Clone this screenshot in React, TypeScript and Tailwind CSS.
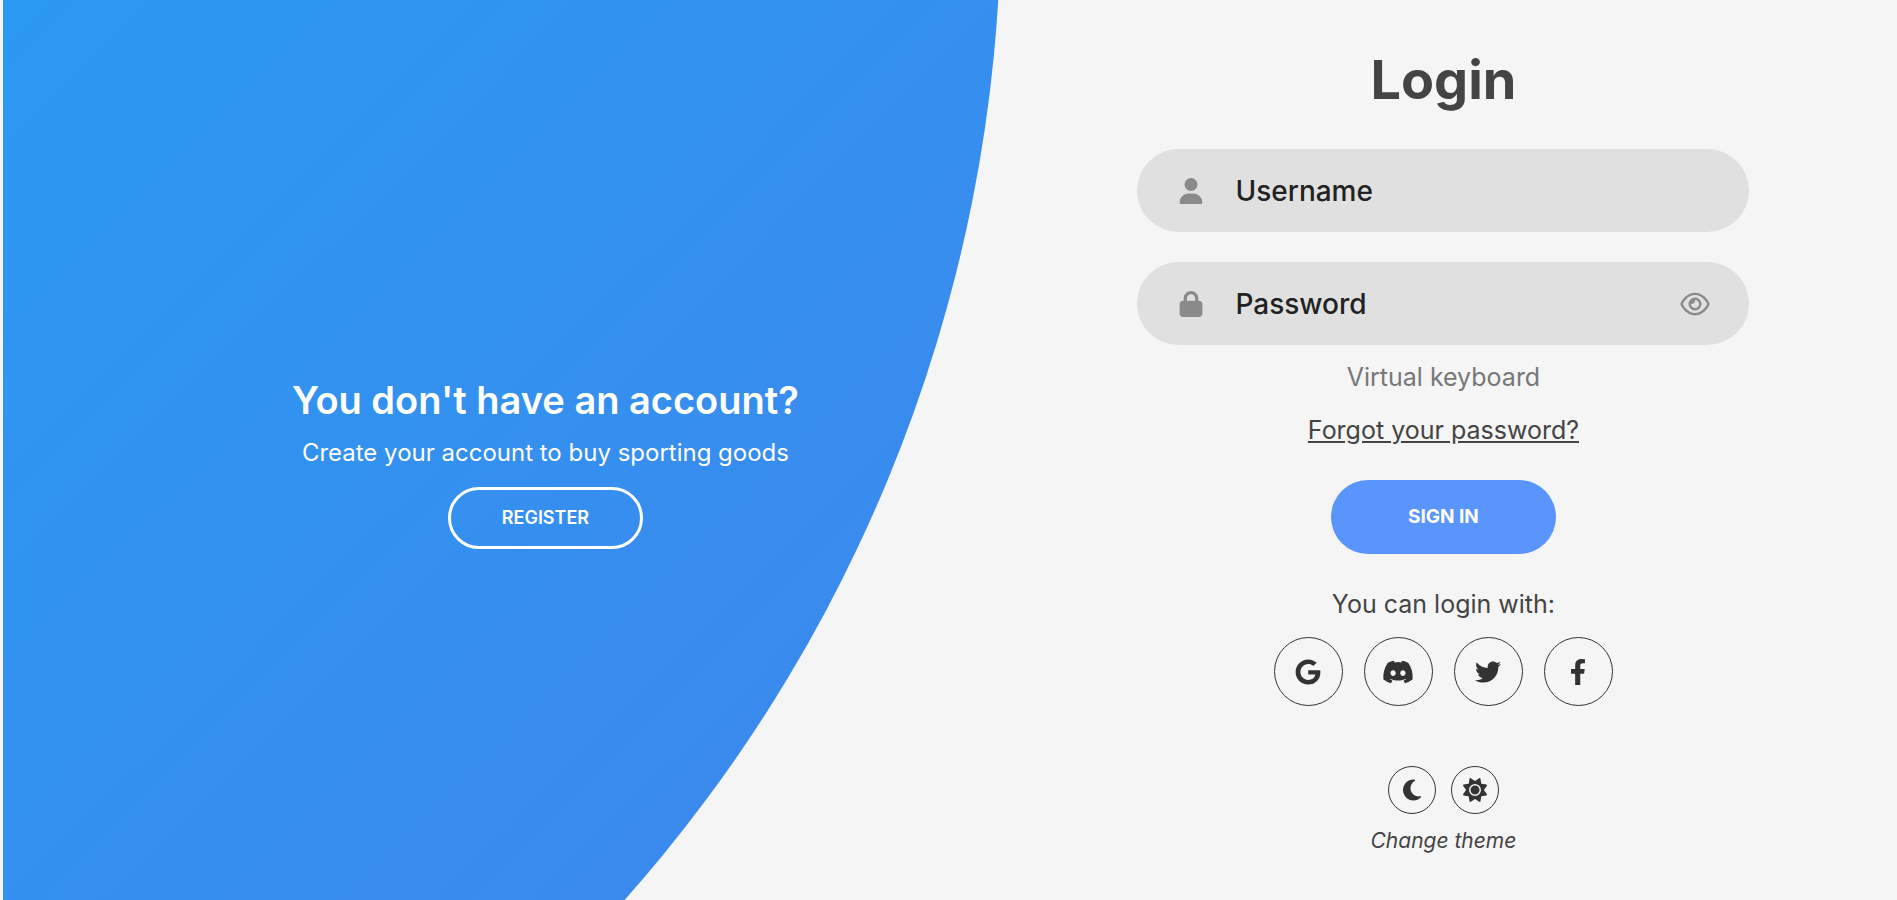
import type { ReactNode } from "react";
import { FaFacebookF } from "react-icons/fa";
import {
  FaDiscord,
  FaGoogle,
  FaLock,
  FaMoon,
  FaRegEye,
  FaSun,
  FaTwitter,
  FaUser,
} from "react-icons/fa6";

const FIELD =
  "flex h-[83px] w-full items-center rounded-full bg-[#e0e0e0] px-[39px] text-[#8a8a8a]";
const INPUT =
  "ml-[29px] min-w-0 flex-1 bg-transparent text-[28px] leading-10 font-medium text-[#222] outline-none placeholder:text-[#222] placeholder:opacity-100";

function SocialLink({ label, children }: { label: string; children: ReactNode }) {
  return (
    <a
      href="#"
      aria-label={label}
      className="flex h-[69px] w-[69px] items-center justify-center rounded-full border border-[#333] text-[26px] text-[#333]"
    >
      {children}
    </a>
  );
}

function ThemeButton({ label, children }: { label: string; children: ReactNode }) {
  return (
    <button
      type="button"
      aria-label={label}
      className="flex h-12 w-12 items-center justify-center rounded-full border border-[#333] text-[#333]"
    >
      {children}
    </button>
  );
}

export default function App() {
  return (
    <div className="min-h-screen bg-[#f5f5f5] pl-[3px] font-['Inter','Open_Sans',sans-serif]">
      <main className="relative grid min-h-screen grid-cols-[52fr_48fr] overflow-hidden">
        <div className="absolute top-[-10%] right-[47.3%] h-[2980px] w-[2980px] -translate-y-1/2 rounded-full bg-[linear-gradient(-45deg,#4481eb_0%,#04befe_100%)]" />

        <section className="relative flex flex-col items-center justify-center pt-6 pl-[100px] text-center text-white">
          <h2 className="text-[38px] leading-[48px] font-semibold">You don't have an account?</h2>
          <p className="mt-[13px] text-[24px] leading-8">Create your account to buy sporting goods</p>
          <button
            type="button"
            className="mt-[18px] h-[62px] w-[195px] rounded-full border-3 border-white text-[18px] leading-6 font-semibold"
          >
            REGISTER
          </button>
        </section>

        <section className="relative flex flex-col items-center pt-10 pr-[22px] pb-10 pl-6 text-[#444]">
          <form className="flex w-full max-w-[612px] flex-col items-center" onSubmit={(e) => e.preventDefault()}>
            <h1 className="text-[54px] leading-[80px] font-bold">Login</h1>
            <div className="mt-[29px] flex w-full flex-col gap-[30px]">
              <div className={FIELD}>
                <FaUser className="h-[26px] w-[30px]" aria-hidden="true" />
                <input type="text" aria-label="Username" placeholder="Username" className={INPUT} />
              </div>
              <div className={FIELD}>
                <FaLock className="h-[26px] w-[30px]" aria-hidden="true" />
                <input type="password" aria-label="Password" placeholder="Password" className={INPUT} />
                <button type="button" aria-label="Show password">
                  <FaRegEye className="h-[26px] w-[30px]" />
                </button>
              </div>
            </div>
            <button type="button" className="mt-4 text-[25px] leading-8 text-[#777]">
              Virtual keyboard
            </button>
            <a href="#" className="mt-[21px] text-[25px] leading-8 underline">
              Forgot your password?
            </a>
            <button
              type="submit"
              className="mt-[34px] h-[74px] w-[225px] rounded-full bg-[#5995fd] text-[19px] leading-6 font-bold text-white"
            >
              SIGN IN
            </button>
          </form>

          <p className="mt-[34px] text-[25px] leading-8">You can login with:</p>
          <div className="mt-[17px] flex gap-[21px]">
            <SocialLink label="Google"><FaGoogle /></SocialLink>
            <SocialLink label="Discord"><FaDiscord className="h-8 w-8" /></SocialLink>
            <SocialLink label="Twitter"><FaTwitter /></SocialLink>
            <SocialLink label="Facebook"><FaFacebookF /></SocialLink>
          </div>

          <div className="mt-[60px] flex gap-[15px]">
            <ThemeButton label="Dark theme"><FaMoon className="h-6 w-6" /></ThemeButton>
            <ThemeButton label="Light theme"><FaSun className="h-6 w-6" /></ThemeButton>
          </div>
          <p className="mt-[15px] text-[21px] leading-6 italic">Change theme</p>
        </section>
      </main>
    </div>
  );
}
